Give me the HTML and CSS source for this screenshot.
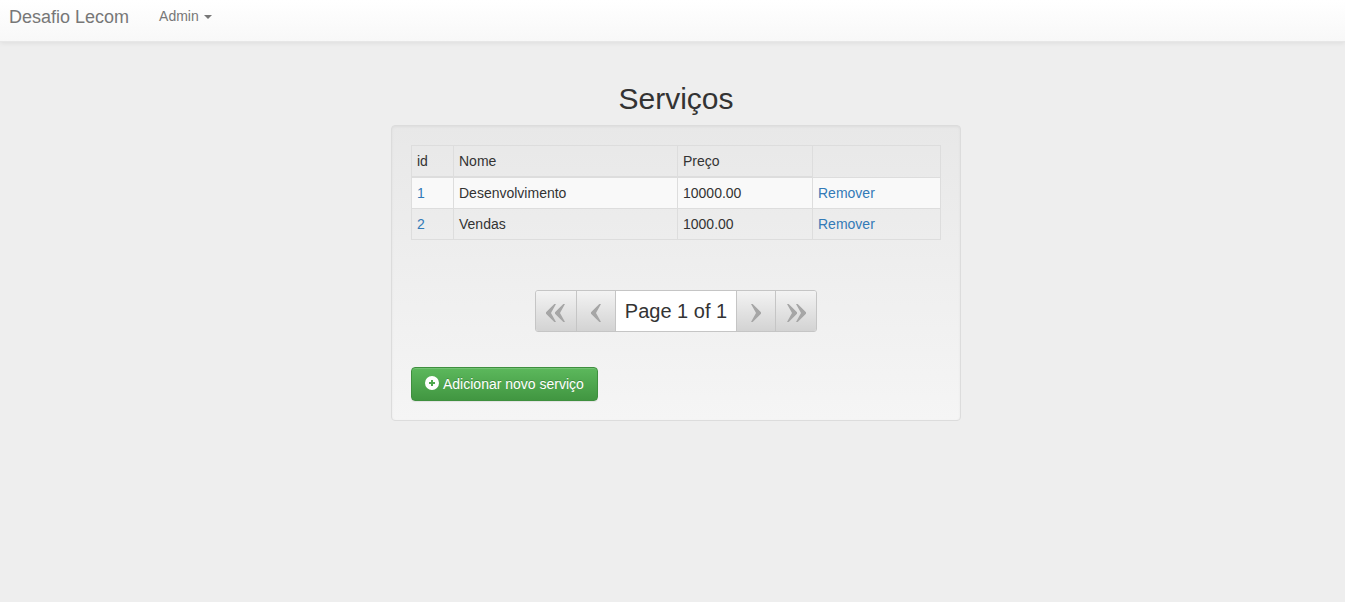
FILE: index.html
```html
<!DOCTYPE html>
<html lang="pt-BR">
<head>
<meta charset="utf-8">
<meta name="viewport" content="width=device-width, initial-scale=1">
<title>Desafio Lecom</title>
<link rel="stylesheet" href="styles.css">
</head>
<body>
<svg class="defs" width="0" height="0" aria-hidden="true">
  <symbol id="single" viewBox="0 0 10 18"><path d="M8.3 0 0 8.2v1.6L8.3 18H10L5 9l5-9z"/></symbol>
  <symbol id="double" viewBox="0 0 19 18"><path d="M8.3 0 0 8.2v1.6L8.3 18H10L5 9l5-9zM17.3 0 9 8.2v1.6L17.3 18H19l-5-9 5-9z"/></symbol>
</svg>
<nav class="navbar">
  <a class="brand" href="#">Desafio Lecom</a>
  <a class="nav-link" href="#">Admin <span class="caret"></span></a>
</nav>
<main class="page">
  <div class="content">
    <h2 class="title">Serviços</h2>
    <section class="well">
      <table class="table">
        <colgroup><col class="col-id"><col class="col-name"><col class="col-price"><col></colgroup>
        <thead>
          <tr><th scope="col">id</th><th scope="col">Nome</th><th scope="col">Preço</th><td></td></tr>
        </thead>
        <tbody>
          <tr><td><a href="#">1</a></td><td>Desenvolvimento</td><td>10000.00</td><td><a href="#">Remover</a></td></tr>
          <tr><td><a href="#">2</a></td><td>Vendas</td><td>1000.00</td><td><a href="#">Remover</a></td></tr>
        </tbody>
      </table>
      <div class="pager-row">
        <div class="pager">
          <button class="page-btn wide" type="button" aria-label="First"><svg width="19" height="18"><use href="#double"/></svg></button>
          <button class="page-btn" type="button" aria-label="Previous"><svg width="10" height="18"><use href="#single"/></svg></button>
          <span class="page-label">Page 1 of 1</span>
          <button class="page-btn next" type="button" aria-label="Next"><svg width="10" height="18"><use href="#single"/></svg></button>
          <button class="page-btn wide next" type="button" aria-label="Last"><svg width="19" height="18"><use href="#double"/></svg></button>
        </div>
      </div>
      <button class="btn-success" type="button">
        <svg class="plus" width="14" height="14" viewBox="0 0 14 14" aria-hidden="true"><path fill="#fff" fill-rule="evenodd" d="M7 0a7 7 0 1 1 0 14A7 7 0 0 1 7 0zM6 4v2H4v2h2v2h2V8h2V6H8V4z"/></svg>
        <span>Adicionar novo serviço</span>
      </button>
    </section>
  </div>
</main>
</body>
</html>
```
FILE: styles.css
```css
* { box-sizing: border-box; }
body {
  margin: 0;
  background: #eee;
  color: #333;
  font: 14px/20px "Liberation Sans", Arial, sans-serif;
}
a { color: #337ab7; text-decoration: none; }
.defs { position: absolute; }
.navbar {
  display: flex;
  align-items: flex-start;
  gap: 30px;
  padding: 6px 9px 13px;
  border-bottom: 1px solid #e7e7e7;
  background: linear-gradient(#fff, #f8f8f8);
  box-shadow: 0 1px 5px rgba(0, 0, 0, .075);
}
.navbar a { color: #777; text-shadow: 0 1px 0 rgba(255, 255, 255, .25); }
.navbar .brand { font-size: 18px; line-height: 22px; }
.nav-link { display: flex; align-items: center; gap: 5px; }
.caret {
  margin-top: 1px;
  border-top: 4px solid;
  border-left: 4px solid transparent;
  border-right: 4px solid transparent;
}
.page { padding: 40px 0 0 7px; }
.content { max-width: 570px; margin: 0 auto; }
.title {
  margin: 0 0 10px;
  font-size: 30px;
  line-height: 33px;
  font-weight: 500;
  text-align: center;
}
.well {
  padding: 19px;
  border: 1px solid #dcdcdc;
  border-radius: 4px;
  background: linear-gradient(#e8e8e8, #f5f5f5);
  box-shadow: inset 0 1px 3px rgba(0, 0, 0, .05), 0 1px 0 rgba(255, 255, 255, .1);
}
.table {
  width: 100%;
  table-layout: fixed;
  border-collapse: collapse;
}
.col-id { width: 42px; }
.col-name { width: 224px; }
.col-price { width: 135px; }
.table th, .table td {
  padding: 5px;
  border: 1px solid #ddd;
  text-align: left;
  vertical-align: top;
  font-weight: 400;
}
.table th { border-bottom-width: 2px; }
.table tbody tr:first-child { background: #f9f9f9; }
.pager-row { display: flex; justify-content: center; margin: 50px 0 35px; }
.pager {
  display: flex;
  height: 42px;
  border: 1px solid #c5c5c5;
  border-radius: 3px;
  overflow: hidden;
}
.page-btn {
  display: flex;
  align-items: center;
  justify-content: center;
  width: 39px;
  padding: 4px 0 0;
  border: 0;
  border-right: 1px solid #c5c5c5;
  background: linear-gradient(#f3f3f3, #d3d3d3);
  fill: #a6a6a6;
}
.page-btn.wide { width: 41px; }
.page-btn.next { border-right: 0; border-left: 1px solid #c5c5c5; }
.next svg { transform: scaleX(-1); }
.page-label {
  padding: 0 9px;
  background: #fff;
  font-size: 20px;
  line-height: 40px;
}
.btn-success {
  display: flex;
  align-items: center;
  gap: 4px;
  padding: 6px 13px;
  border: 1px solid #3e8f3e;
  border-radius: 4px;
  background: linear-gradient(#5cb85c, #419641);
  box-shadow: inset 0 1px 0 rgba(255, 255, 255, .15), 0 1px 1px rgba(0, 0, 0, .075);
  color: #fff;
  font: inherit;
  text-shadow: 0 -1px 0 rgba(0, 0, 0, .2);
}
.plus { margin-bottom: 2px; }
```
